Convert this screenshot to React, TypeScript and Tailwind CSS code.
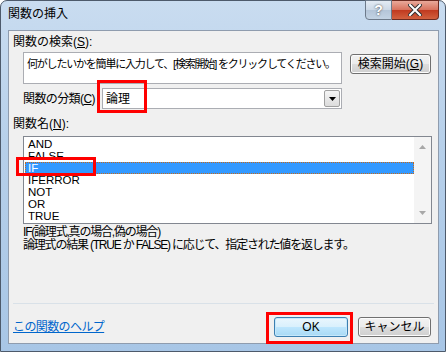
import React from "react";

const FONT = '"Liberation Sans","Noto Sans CJK JP",sans-serif';

const ITEMS = ["AND", "FALSE", "IF", "IFERROR", "NOT", "OR", "TRUE"];

function Btn({ children, primary }: { children: React.ReactNode; primary?: boolean }) {
  return (
    <div
      className={
        "flex h-[20px] items-center justify-center rounded-[3px] border text-[12px] leading-[12px] text-black " +
        (primary
          ? "border-[#3c7fb1] bg-[linear-gradient(#eaf6fd,#d9f0fc_50%,#bee6fd_51%,#a7d9f5)] shadow-[inset_0_0_0_1px_#c6e8fb]"
          : "border-[#707070] bg-[linear-gradient(#f2f2f2,#ebebeb_50%,#dddddd_51%,#cfcfcf)] shadow-[inset_0_0_0_1px_#fcfcfc]")
      }
    >
      {children}
    </div>
  );
}

export default function App() {
  return (
    <div className="relative h-[352px] w-[446px] bg-white" style={{ fontFamily: FONT }}>
      <div className="flex h-full w-full flex-col rounded-t-[7px] border border-[#4d5a6b] bg-[linear-gradient(180deg,#c9dcf0_0%,#b7d0ea_40%,#a8c6e6_100%)]">
        {/* title bar */}
        <div className="flex h-[29px] shrink-0 items-start justify-between">
          <div className="pl-[7px] pt-[7px] text-[12px] leading-[12px] text-black">関数の挿入</div>
          <div className="mr-[6px] mt-[-1px] flex">
            <div className="flex h-[20px] w-[27px] items-center justify-center rounded-bl-[4px] border border-[#6d7a8a] bg-[linear-gradient(#e3ebf4,#cbd8e6_50%,#b4c5d8_51%,#c3d3e4)] text-[14px] font-bold leading-[14px] text-white [text-shadow:0_0_2px_#333]">
              ?
            </div>
            <div className="flex h-[20px] w-[47px] items-center justify-center rounded-br-[4px] border border-l-0 border-[#6b2a20] bg-[linear-gradient(#e9a99a,#d8715c_50%,#c0391f_51%,#d2613f)]">
              <svg width="14" height="12" viewBox="0 0 14 12">
                <path d="M2 1 L12 11 M12 1 L2 11" stroke="#333" strokeWidth="4" strokeLinecap="square" />
                <path d="M2 1 L12 11 M12 1 L2 11" stroke="#fff" strokeWidth="2" strokeLinecap="square" />
              </svg>
            </div>
          </div>
        </div>

        {/* client area */}
        <div className="mb-[7px] ml-[7px] mr-[6px] flex flex-1 flex-col border border-[#8f9cae] bg-[#f0f0f0] text-[12px] leading-[12px] text-black">
          <div className="ml-[4px] mt-[5px]">
            関数の検索(<span className="underline">S</span>):
          </div>

          <div className="ml-[14px] mt-[4px] flex items-start gap-[8px]">
            <div className="h-[32px] w-[319px] whitespace-nowrap border border-[#abadb3] bg-white pl-[3px] pt-[5px] text-[11px] tracking-[-1.2px]">
              何がしたいかを簡単に入力して、[検索開始] をクリックしてください。
            </div>
            <div className="mt-[2px] w-[81px]">
              <Btn>
                検索開始(<span className="underline">G</span>)
              </Btn>
            </div>
          </div>

          <div className="ml-[14px] mt-[4px] flex items-center gap-[2px]">
            <div className="w-[77px] tracking-[-0.6px]">
              関数の分類(<span className="underline">C</span>)
            </div>
            <div className="flex h-[21px] w-[240px] items-center justify-between border border-[#abadb3] bg-white">
              <span className="pl-[3px]">論理</span>
              <div className="mr-[1px] flex h-[17px] w-[16px] items-center justify-center rounded-[2px] border border-[#a0a0a0] bg-[linear-gradient(#f5f5f5,#dcdcdc)]">
                <svg width="7" height="4" viewBox="0 0 7 4">
                  <path d="M0 0 H7 L3.5 4 Z" fill="#000" />
                </svg>
              </div>
            </div>
          </div>

          <div className="ml-[4px] mt-[9px]">
            関数名(<span className="underline">N</span>):
          </div>

          <div className="ml-[14px] mt-[6px] flex h-[88px] w-[409px] border border-[#828790] bg-white">
            <div className="flex flex-1 flex-col pl-[1px] pt-[1px] text-[11.5px]">
              {ITEMS.map((t) => (
                <div
                  key={t}
                  className={
                    "h-[12px] pl-[3px] leading-[12px] " +
                    (t === "IF" ? "bg-[#3399ff] text-white outline-1 -outline-offset-1 outline-dotted outline-[#c76a1a]" : "")
                  }
                >
                  {t}
                </div>
              ))}
            </div>
            <div className="flex w-[17px] flex-col items-center justify-between bg-[#f4f4f4] py-[8px]">
              <svg width="7" height="4" viewBox="0 0 7 4">
                <path d="M0 4 H7 L3.5 0 Z" fill="#a8a8a8" />
              </svg>
              <svg width="7" height="4" viewBox="0 0 7 4">
                <path d="M0 0 H7 L3.5 4 Z" fill="#a8a8a8" />
              </svg>
            </div>
          </div>

          <div className="ml-[14px] mt-[2px] whitespace-nowrap leading-[13px] tracking-[-1.2px]">
            <div>IF(論理式,真の場合,偽の場合)</div>
            <div>論理式の結果 (TRUE か FALSE) に応じて、指定された値を返します。</div>
          </div>

          <div className="flex-1" />

          <div className="mx-[4px] h-px bg-[#d9e1e8]" />

          <div className="ml-[4px] mr-[7px] mt-[13px] mb-[6px] flex items-center">
            <div className="flex-1 text-[#0066cc] underline tracking-[-0.6px]">この関数のヘルプ</div>
            <div className="w-[74px]">
              <Btn primary>OK</Btn>
            </div>
            <div className="ml-[10px] w-[73px]">
              <Btn>キャンセル</Btn>
            </div>
          </div>
        </div>
      </div>

      {/* red highlight frames */}
      <div className="pointer-events-none absolute left-[97px] top-[80px] h-[33px] w-[50px] border-[3px] border-[#ff0000]" />
      <div className="pointer-events-none absolute left-[16px] top-[157px] h-[19px] w-[80px] border-[3px] border-[#ff0000]" />
      <div className="pointer-events-none absolute left-[266px] top-[312px] h-[32px] w-[87px] border-[3px] border-[#ff0000]" />
    </div>
  );
}
